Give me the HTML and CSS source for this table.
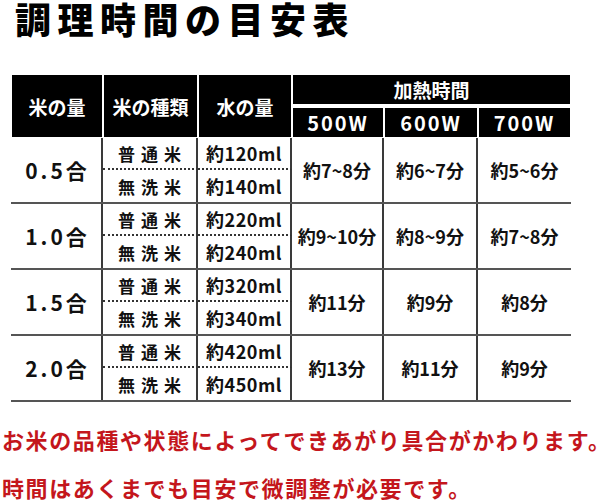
FILE: index.html
```html
<!DOCTYPE html>
<html lang="ja">
<head>
<meta charset="utf-8">
<link rel="stylesheet" href="styles.css">
</head>
<body>
<div class="page">
  <h1 class="title">調理時間の目安表</h1>
  <div class="table">
    <div class="thead">
      <div class="th span-rows">米の量</div>
      <div class="th span-rows">米の種類</div>
      <div class="th span-rows">水の量</div>
      <div class="th h-time">加熱時間</div>
      <div class="th w">500W</div>
      <div class="th w">600W</div>
      <div class="th w">700W</div>
    </div>

    <div class="group">
      <div class="c amount">0.5合</div>
      <div class="c kind sub1">普通米</div>
      <div class="c water sub1">約120ml</div>
      <div class="c time">約7~8分</div>
      <div class="c time">約6~7分</div>
      <div class="c time last">約5~6分</div>
      <div class="c kind">無洗米</div>
      <div class="c water">約140ml</div>
    </div>

    <div class="group">
      <div class="c amount">1.0合</div>
      <div class="c kind sub1">普通米</div>
      <div class="c water sub1">約220ml</div>
      <div class="c time">約9~10分</div>
      <div class="c time">約8~9分</div>
      <div class="c time last">約7~8分</div>
      <div class="c kind">無洗米</div>
      <div class="c water">約240ml</div>
    </div>

    <div class="group">
      <div class="c amount">1.5合</div>
      <div class="c kind sub1">普通米</div>
      <div class="c water sub1">約320ml</div>
      <div class="c time">約11分</div>
      <div class="c time">約9分</div>
      <div class="c time last">約8分</div>
      <div class="c kind">無洗米</div>
      <div class="c water">約340ml</div>
    </div>

    <div class="group">
      <div class="c amount">2.0合</div>
      <div class="c kind sub1">普通米</div>
      <div class="c water sub1">約420ml</div>
      <div class="c time">約13分</div>
      <div class="c time">約11分</div>
      <div class="c time last">約9分</div>
      <div class="c kind">無洗米</div>
      <div class="c water">約450ml</div>
    </div>
  </div>

  <div class="note">
    <p>お米の品種や状態によってできあがり具合がかわります。</p>
    <p>時間はあくまでも目安で微調整が必要です。</p>
  </div>
</div>
</body>
</html>
```

FILE: styles.css
```css
* { box-sizing: border-box; }
html, body { margin: 0; padding: 0; background: #fff; }
body {
  font-family: "Noto Sans CJK JP", "Noto Sans", sans-serif;
  color: #111;
  width: 600px;
  height: 501px;
  overflow: hidden;
}
.page { display: flex; flex-direction: column; }

.title {
  margin: 0;
  padding-left: 15px;
  font-size: 36px;
  line-height: 36px;
  height: 40px;
  font-weight: 900;
  letter-spacing: 6.5px;
  color: #000;
  white-space: nowrap;
}

.table {
  margin-top: 34px;
  margin-left: 11px;
  width: 560px;
  display: flex;
  flex-direction: column;
}

.thead {
  display: grid;
  grid-template-columns: 92px 95px 94px 92px 94px 93px;
  grid-template-rows: 32px 32px;
}
.th {
  background: #000;
  color: #fff;
  border: 1px solid #fff;
  font-weight: 700;
  font-size: 19px;
  display: flex;
  align-items: center;
  justify-content: center;
}
.span-rows { grid-row: span 2; }
.h-time { grid-column: span 3; border-bottom-width: 2px; }
.w { font-size: 20px; letter-spacing: 2px; border-top-width: 2px; }

.group {
  display: grid;
  grid-template-columns: 92px 95px 94px 92px 94px 93px;
  grid-template-rows: 32px 32px;
  border-bottom: 2px solid #555;
}
.c {
  display: flex;
  align-items: center;
  justify-content: center;
  font-weight: 700;
  font-size: 18px;
  border-right: 2px solid #3a3a3a;
  color: #111;
}
.c.last { border-right: 0; }
.amount {
  grid-row: span 2;
  font-size: 21px;
  letter-spacing: 3px;
  padding-left: 3px;
}
.kind { font-size: 17px; letter-spacing: 6px; padding-left: 6px; }
.water { letter-spacing: 0.5px; }
.time { grid-row: span 2; font-size: 18px; }
.sub1 { border-bottom: 2px dotted #333; }

.note {
  margin-top: 24px;
  padding-left: 2px;
  color: #c4161c;
  font-weight: 700;
  font-size: 22px;
  letter-spacing: 1.6px;
  line-height: 26px;
  white-space: nowrap;
  display: flex;
  flex-direction: column;
  gap: 22px;
}
.note p { margin: 0; }
```
